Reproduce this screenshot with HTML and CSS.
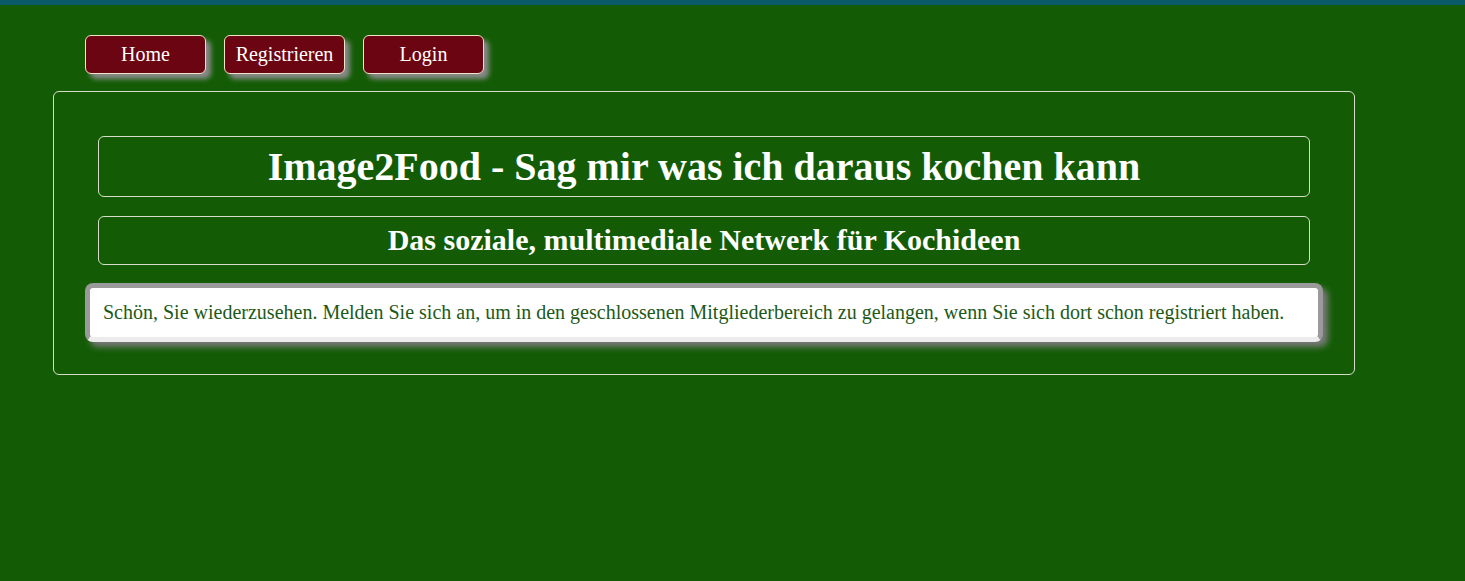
FILE: index.html
```html
<!DOCTYPE html>
<html lang="de">
<head>
<meta charset="utf-8">
<title>Image2Food</title>
<link rel="stylesheet" href="styles.css">
</head>
<body>
<nav class="nav">
  <a class="btn" href="#">Home</a>
  <a class="btn" href="#">Registrieren</a>
  <a class="btn" href="#">Login</a>
</nav>
<main class="container">
  <div class="titlebox title-main"><h1>Image2Food - Sag mir was ich daraus kochen kann</h1></div>
  <div class="titlebox title-sub"><h2>Das soziale, multimediale Netwerk für Kochideen</h2></div>
  <div class="message">Schön, Sie wiederzusehen. Melden Sie sich an, um in den geschlossenen Mitgliederbereich zu gelangen, wenn Sie sich dort schon registriert haben.</div>
</main>
</body>
</html>
```
FILE: styles.css
```css
html, body {
  margin: 0;
  padding: 0;
}
body {
  background: #135c05;
  border-top: 5px solid #0b5a6a;
  min-height: 576px;
  font-family: "Liberation Serif", "Times New Roman", serif;
  color: #fff;
}
.nav {
  display: flex;
  gap: 18px;
  padding: 30px 0 0 85px;
}
.btn {
  box-sizing: border-box;
  width: 121px;
  height: 39px;
  display: flex;
  align-items: center;
  justify-content: center;
  background: #6c0512;
  border: 1px solid #efe6c8;
  border-radius: 6px;
  box-shadow: 5px 5px 5px #8a8a8a;
  color: #fff;
  text-decoration: none;
  font-size: 20px;
}
.container {
  box-sizing: border-box;
  width: 1302px;
  margin: 17px 0 0 53px;
  border: 1px solid #d8dccb;
  border-radius: 6px;
  padding: 44px 44px 32px 44px;
}
.titlebox {
  border: 1px solid #d8dccb;
  border-radius: 6px;
  text-align: center;
}
.titlebox h1, .titlebox h2 {
  margin: 0;
  font-weight: bold;
}
.title-main {
  padding: 9px 0 9px;
}
.title-main h1 {
  font-size: 40px;
  line-height: 41px;
}
.title-sub {
  margin-top: 19px;
  padding: 7px 0 8px;
}
.title-sub h2 {
  font-size: 30px;
  line-height: 32px;
}
.message {
  margin: 18px -13px 0;
  background: #fff;
  border: 5px solid #9a9a9a;
  border-bottom-color: #ececec;
  border-radius: 8px;
  box-shadow: 5px 5px 6px #7a7a7a;
  color: #1d5a17;
  font-size: 20px;
  line-height: 23px;
  padding: 13px 13px 13px 13px;
}
```
